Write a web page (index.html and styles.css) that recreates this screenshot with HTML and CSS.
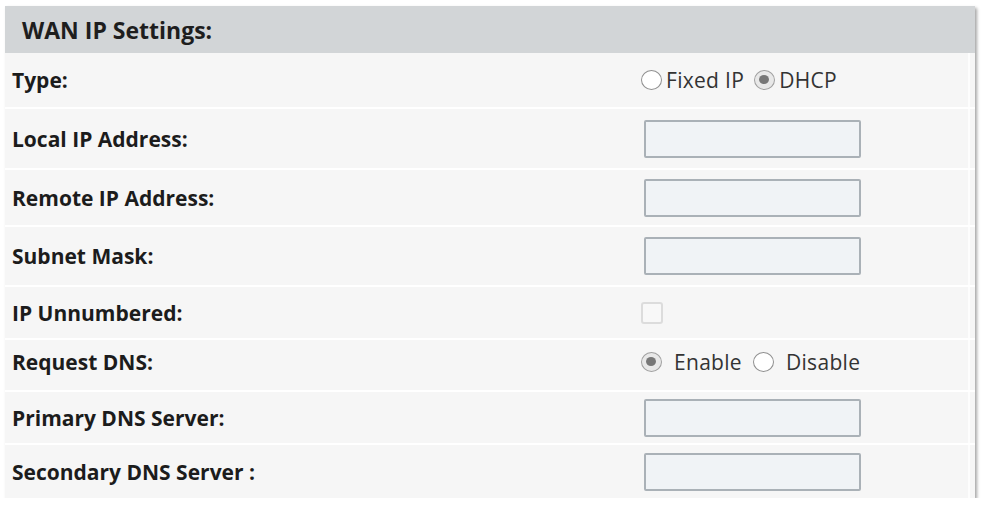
FILE: index.html
```html
<!DOCTYPE html>
<html>
<head>
<meta charset="utf-8">
<link rel="stylesheet" href="styles.css">
</head>
<body>
<div class="panel">
  <div class="header">WAN IP Settings:</div>
  <div class="row r1">
    <div class="label">Type:</div>
    <div class="ctrl">
      <label class="opt"><span class="radio"></span>Fixed IP</label>
      <label class="opt"><span class="radio on"></span>DHCP</label>
    </div>
  </div>
  <div class="row r2">
    <div class="label">Local IP Address:</div>
    <div class="ctrl"><input class="field" type="text"></div>
  </div>
  <div class="row r3">
    <div class="label">Remote IP Address:</div>
    <div class="ctrl"><input class="field" type="text"></div>
  </div>
  <div class="row r4">
    <div class="label">Subnet Mask:</div>
    <div class="ctrl"><input class="field" type="text"></div>
  </div>
  <div class="row r5">
    <div class="label">IP Unnumbered:</div>
    <div class="ctrl"><span class="check"></span></div>
  </div>
  <div class="row r6">
    <div class="label">Request DNS:</div>
    <div class="ctrl">
      <label class="opt wide"><span class="radio on"></span>Enable</label>
      <label class="opt wide"><span class="radio"></span>Disable</label>
    </div>
  </div>
  <div class="row r7">
    <div class="label">Primary DNS Server:</div>
    <div class="ctrl"><input class="field" type="text"></div>
  </div>
  <div class="row r8">
    <div class="label">Secondary DNS Server :</div>
    <div class="ctrl"><input class="field" type="text"></div>
  </div>
</div>
</body>
</html>
```

FILE: styles.css
```css
html, body {
  margin: 0;
  padding: 0;
  background: #ffffff;
}
body {
  font-family: "Open Sans", "Noto Sans", sans-serif;
  color: #222;
}
.panel {
  margin: 6px 0 0 5px;
  width: 970px;
  background: #f6f6f6;
  box-shadow: 2px 2px 3px rgba(0, 0, 0, 0.35);
}
.header {
  height: 47px;
  box-sizing: border-box;
  background: #d2d5d7;
  font-weight: 700;
  font-size: 23px;
  padding-left: 17px;
  display: flex;
  align-items: center;
  color: #1e1e1e;
}
.row {
  display: grid;
  grid-template-columns: 636px 1fr;
  align-items: center;
  border-top: 2px solid #ffffff;
  box-sizing: border-box;
  box-shadow: inset -5px 0 0 #f6f6f6, inset -7px 0 0 #fdfdfd;
}
.r1 { height: 54px; border-top: 0; }
.r2 { height: 61px; }
.r3 { height: 57px; }
.r4 { height: 60px; }
.r5 { height: 53px; }
.r6 { height: 52px; padding-bottom: 7px; }
.r7 { height: 53px; }
.r8 { height: 55px; }
.label {
  padding-left: 7px;
  font-weight: 700;
  font-size: 21px;
  color: #1c1c1c;
}
.ctrl {
  display: flex;
  align-items: center;
  font-size: 21px;
  letter-spacing: 0.3px;
  color: #333;
}
.opt {
  display: flex;
  align-items: center;
  margin-right: 10px;
}
.opt .radio {
  margin-right: 4px;
}
.opt.wide {
  margin-right: 11px;
}
.opt.wide .radio {
  margin-right: 12px;
}
.radio {
  width: 21px;
  height: 20px;
  border-radius: 50%;
  border: 1.5px solid #8f8f8f;
  background: #ffffff;
  box-sizing: border-box;
  display: inline-block;
  position: relative;
}
.radio.on {
  border-color: #a0a0a0;
  background: #e8e8e8;
}
.radio.on::after {
  content: "";
  position: absolute;
  left: 4px;
  top: 4px;
  width: 10px;
  height: 9px;
  border-radius: 50%;
  background: #777;
}
.field {
  margin: 0 0 0 3px;
  width: 217px;
  height: 38px;
  box-sizing: border-box;
  border: 2px solid #aab1b7;
  border-radius: 2px;
  background: #f0f3f6;
  padding: 0 6px;
  font: inherit;
}
.check {
  width: 22px;
  height: 22px;
  box-sizing: border-box;
  border: 2px solid #dcdcdc;
  border-radius: 3px;
  background: #f8f8f8;
  display: inline-block;
}
```
